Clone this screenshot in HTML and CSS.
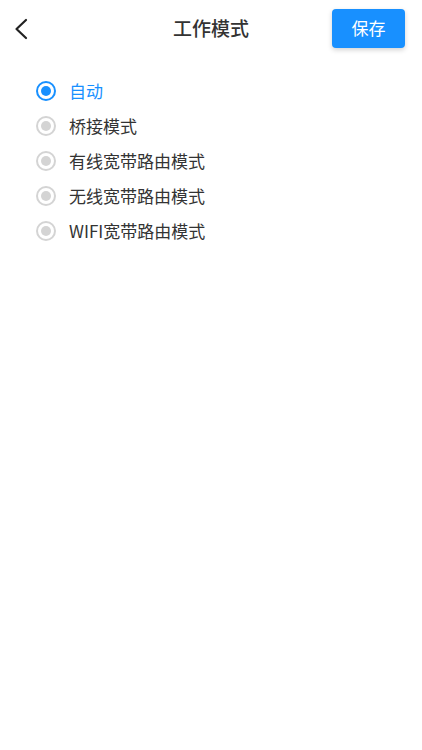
FILE: index.html
```html
<!DOCTYPE html>
<html lang="zh-CN">
<head>
    <meta charset="UTF-8">
    <meta name="viewport" content="width=device-width, initial-scale=1.0">
    <title>工作模式</title>
    <link rel="stylesheet" href="styles.css">
</head>
<body>

<div class="page">
    <!-- top bar -->
    <div class="header">
        <a class="back" href="#">
            <svg width="16" height="22" viewBox="0 0 16 22">
                <polyline points="13,2 3.5,11 13,20" fill="none" stroke="#222" stroke-width="2.2" stroke-linecap="round" stroke-linejoin="round"/>
            </svg>
        </a>
        <h1>工作模式</h1>
        <button class="save" type="button">保存</button>
    </div>

    <!-- mode list -->
    <ul class="modes">
        <li class="mode active"><span class="radio"></span>自动</li>
        <li class="mode"><span class="radio"></span>桥接模式</li>
        <li class="mode"><span class="radio"></span>有线宽带路由模式</li>
        <li class="mode"><span class="radio"></span>无线宽带路由模式</li>
        <li class="mode"><span class="radio"></span>WIFI宽带路由模式</li>
    </ul>
</div>

</body>
</html>
```

FILE: styles.css
```css
body {
    font-family: "Noto Sans CJK SC", "Noto Sans", sans-serif;
    margin: 0;
    padding: 0;
    background-color: #fff;
    color: #333;
}

.page {
    width: 422px;
    height: 750px;
}

.header {
    display: flex;
    align-items: center;
    justify-content: space-between;
    height: 57px;
    padding: 0 17px 0 13px;
    position: relative;
}

.back {
    display: flex;
    align-items: center;
    width: 30px;
    height: 30px;
}

.header h1 {
    position: absolute;
    left: 0;
    right: 0;
    top: 0;
    margin: 0;
    line-height: 56px;
    font-size: 19px;
    font-weight: 500;
    color: #333;
    text-align: center;
    pointer-events: none;
}

.save {
    width: 73px;
    height: 39px;
    padding: 0 0 2px;
    border: none;
    border-radius: 4px;
    background-color: #1890ff;
    color: #fff;
    font-family: inherit;
    font-size: 17px;
    box-shadow: 0 2px 5px rgba(0, 0, 0, 0.18);
    cursor: pointer;
}

.modes {
    list-style: none;
    margin: 0;
    padding: 16px 0 0 36px;
}

.mode {
    display: flex;
    align-items: center;
    height: 35px;
    font-size: 17px;
    line-height: 1;
    color: #333;
}

.radio {
    box-sizing: border-box;
    width: 20px;
    height: 20px;
    margin-right: 13px;
    border: 2px solid #d4d4d4;
    border-radius: 50%;
    display: flex;
    align-items: center;
    justify-content: center;
}

.radio::after {
    content: "";
    width: 10px;
    height: 10px;
    border-radius: 50%;
    background-color: #d4d4d4;
}

.mode.active {
    color: #1890ff;
}

.mode.active .radio {
    border-color: #1890ff;
}

.mode.active .radio::after {
    background-color: #1890ff;
}
```
